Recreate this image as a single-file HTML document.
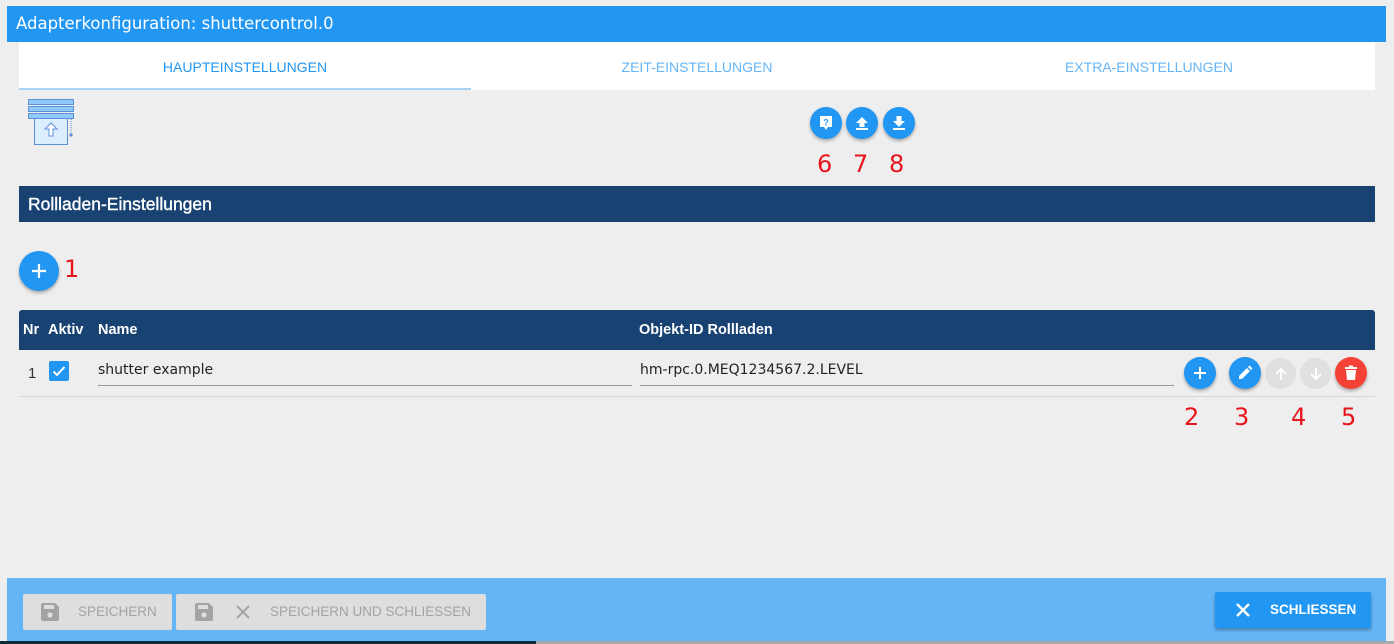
<!DOCTYPE html>
<html><head><meta charset="utf-8"><style>
*{box-sizing:border-box;margin:0;padding:0}
body{width:1394px;height:644px;background:#eeeeee;font-family:"Liberation Sans",sans-serif;position:relative;overflow:hidden}
.abs{position:absolute}
.hdr{left:7px;top:6px;width:1379px;height:36px;background:#2196f3;color:#fff;padding:8px 0 0 9px;font-family:"DejaVu Sans","Liberation Sans",sans-serif;font-size:16.5px}
.tabs{left:19px;top:42px;width:1356px;height:48px;background:#fff}
.tab{position:absolute;top:17px;font-size:14px;color:#2196f3;width:452px;text-align:center}
.fab{position:absolute;border-radius:50%;background:#2196f3;box-shadow:0 2px 3px rgba(0,0,0,.3);display:flex;align-items:center;justify-content:center}
.num{position:absolute;color:#e8141c;font-size:24px;font-family:"DejaVu Sans",sans-serif}
.bar{background:#174271;color:#fff;font-weight:bold}
.btn{position:absolute;top:594px;height:36px;background:#dedede;border-radius:2px;color:#a3a3a3;font-size:13.5px}
</style></head><body>
<div class="abs hdr">Adapterkonfiguration: shuttercontrol.0</div>
<div class="abs tabs">
<div class="tab" style="left:0">HAUPTEINSTELLUNGEN</div>
<div class="tab" style="left:452px;color:#64b5f6">ZEIT-EINSTELLUNGEN</div>
<div class="tab" style="left:904px;color:#64b5f6">EXTRA-EINSTELLUNGEN</div>
<div class="abs" style="left:0;top:46px;width:452px;height:2px;background:#a7d3f7"></div>
</div>
<svg class="abs" style="left:27px;top:98px" width="50" height="48">
<rect x="1.5" y="1.5" width="45" height="5" fill="#90caf9" stroke="#5c8fd6"/>
<rect x="1.5" y="8.5" width="45" height="5" fill="#90caf9" stroke="#5c8fd6"/>
<rect x="1.5" y="15.5" width="45" height="5" fill="#90caf9" stroke="#5c8fd6"/>
<rect x="7.5" y="20.5" width="33" height="26" fill="#dbeeff" stroke="#5c8fd6"/>
<path d="M24 25 l-6 6 h4 v7 h4 v-7 h4z" fill="#fff" stroke="#5c8fd6"/>
<line x1="44" y1="21" x2="44" y2="36" stroke="#5c8fd6" stroke-dasharray="1 1"/>
<circle cx="44" cy="37" r="1.6" fill="#5c8fd6"/>
</svg>
<div class="fab" style="left:810px;top:107px;width:32px;height:32px"><svg width="16" height="16"><path d="M2 1h12v11h-4l-2 3-2-3H2z" fill="#fff"/><text x="8" y="10.5" font-size="9" font-weight="bold" text-anchor="middle" fill="#2196f3" font-family="Liberation Sans">?</text></svg></div>
<div class="fab" style="left:846px;top:107px;width:32px;height:32px"><svg width="16" height="16"><path d="M8 2l6 6h-3.5v4h-5v-4H2z M2 13h12v2H2z" fill="#fff"/></svg></div>
<div class="fab" style="left:883px;top:107px;width:32px;height:32px"><svg width="16" height="16"><path d="M5.5 1h5v5H14l-6 6-6-6h3.5z M2 13h12v2H2z" fill="#fff"/></svg></div>
<div class="num" style="left:817px;top:150px">6</div>
<div class="num" style="left:853px;top:150px">7</div>
<div class="num" style="left:889px;top:150px">8</div>
<div class="abs bar" style="left:19px;top:186px;width:1356px;height:36px;font-size:17.5px;padding:8px 0 0 9px;font-weight:normal;-webkit-text-stroke:0.4px #fff">Rollladen-Einstellungen</div>
<div class="fab" style="left:19px;top:251px;width:40px;height:40px"><svg width="18" height="18"><path d="M9 2v14M2 9h14" stroke="#fff" stroke-width="2.2"/></svg></div>
<div class="num" style="left:64px;top:255px">1</div>
<div class="abs bar" style="left:19px;top:310px;width:1356px;height:40px;font-size:14.5px;border-radius:3px 3px 0 0">
<span class="abs" style="left:4px;top:12px">Nr</span>
<span class="abs" style="left:29px;top:12px">Aktiv</span>
<span class="abs" style="left:79px;top:12px">Name</span>
<span class="abs" style="left:620px;top:12px">Objekt-ID Rollladen</span>
</div>
<div class="abs" style="left:19px;top:396px;width:1356px;height:1px;background:#d6d6d6"></div>
<div class="abs" style="left:28px;top:365px;font-size:15px;color:#333">1</div>
<div class="abs" style="left:49px;top:361px;width:20px;height:20px;background:#2196f3;border-radius:2px"><svg width="20" height="20"><path d="M4.5 10.5l3.5 3.5 7.5-8" stroke="#fff" stroke-width="2" fill="none"/></svg></div>
<div class="abs" style="left:98px;top:362px;color:#222;font-family:'DejaVu Sans',sans-serif;font-size:14px">shutter example</div>
<div class="abs" style="left:98px;top:385px;width:534px;height:1px;background:#999"></div>
<div class="abs" style="left:640px;top:362px;font-size:14px;color:#222;font-family:'DejaVu Sans',sans-serif">hm-rpc.0.MEQ1234567.2.LEVEL</div>
<div class="abs" style="left:640px;top:385px;width:534px;height:1px;background:#999"></div>
<div class="fab" style="left:1184px;top:357px;width:32px;height:32px"><svg width="14" height="14"><path d="M7 1v12M1 7h12" stroke="#fff" stroke-width="2"/></svg></div>
<div class="fab" style="left:1229px;top:357px;width:32px;height:32px"><svg width="16" height="16"><path d="M2 14v-3l8-8 3 3-8 8z M11 2l1.5-1.5 3 3L14 5z" fill="#fff"/></svg></div>
<div class="fab" style="left:1265px;top:358px;width:31px;height:31px;background:#e0e0e0;box-shadow:none"><svg width="14" height="14"><path d="M7 13V2M2 7l5-5 5 5" stroke="#fff" stroke-width="1.8" fill="none"/></svg></div>
<div class="fab" style="left:1300px;top:358px;width:31px;height:31px;background:#e0e0e0;box-shadow:none"><svg width="14" height="14"><path d="M7 1v11M2 7l5 5 5-5" stroke="#fff" stroke-width="1.8" fill="none"/></svg></div>
<div class="fab" style="left:1335px;top:357px;width:32px;height:32px;background:#f44336"><svg width="14" height="16"><path d="M1 2h12v2H1z M5 0.5h4v2H5z M2 5h10l-1 10H3z" fill="#fff"/></svg></div>
<div class="num" style="left:1184px;top:403px">2</div>
<div class="num" style="left:1234px;top:403px">3</div>
<div class="num" style="left:1291px;top:403px">4</div>
<div class="num" style="left:1341px;top:403px">5</div>
<div class="abs" style="left:7px;top:578px;width:1379px;height:63px;background:#64b5f6"></div>
<div class="btn" style="left:23px;width:149px"><svg class="abs" style="left:18px;top:9px" width="18" height="18"><path d="M0 2a2 2 0 012-2h12l4 4v12a2 2 0 01-2 2H2a2 2 0 01-2-2z" fill="#a3a3a3"/><rect x="3" y="2" width="10" height="4" fill="#dedede"/><circle cx="9" cy="12" r="2.6" fill="#dedede"/></svg><span class="abs" style="left:55px;top:10px">SPEICHERN</span></div>
<div class="btn" style="left:176px;width:310px"><svg class="abs" style="left:19px;top:9px" width="18" height="18"><path d="M0 2a2 2 0 012-2h12l4 4v12a2 2 0 01-2 2H2a2 2 0 01-2-2z" fill="#a3a3a3"/><rect x="3" y="2" width="10" height="4" fill="#dedede"/><circle cx="9" cy="12" r="2.6" fill="#dedede"/></svg><svg class="abs" style="left:60px;top:11px" width="14" height="14"><path d="M1 1l12 12M13 1L1 13" stroke="#a3a3a3" stroke-width="2"/></svg><span class="abs" style="left:94px;top:10px">SPEICHERN UND SCHLIESSEN</span></div>
<div class="abs" style="left:1215px;top:592px;width:156px;height:36px;background:#2196f3;border-radius:2px;box-shadow:0 2px 3px rgba(0,0,0,.3);color:#fff;font-size:13.5px;font-weight:bold"><svg class="abs" style="left:20px;top:10px" width="16" height="16"><path d="M2 2l12 12M14 2L2 14" stroke="#fff" stroke-width="2.4"/></svg><span class="abs" style="left:55px;top:10px">SCHLIESSEN</span></div>
<div class="abs" style="left:0;top:641px;width:536px;height:3px;background:#0d2a3a"></div>
<div class="abs" style="left:536px;top:641px;width:858px;height:3px;background:#aaa"></div>
</body></html>
